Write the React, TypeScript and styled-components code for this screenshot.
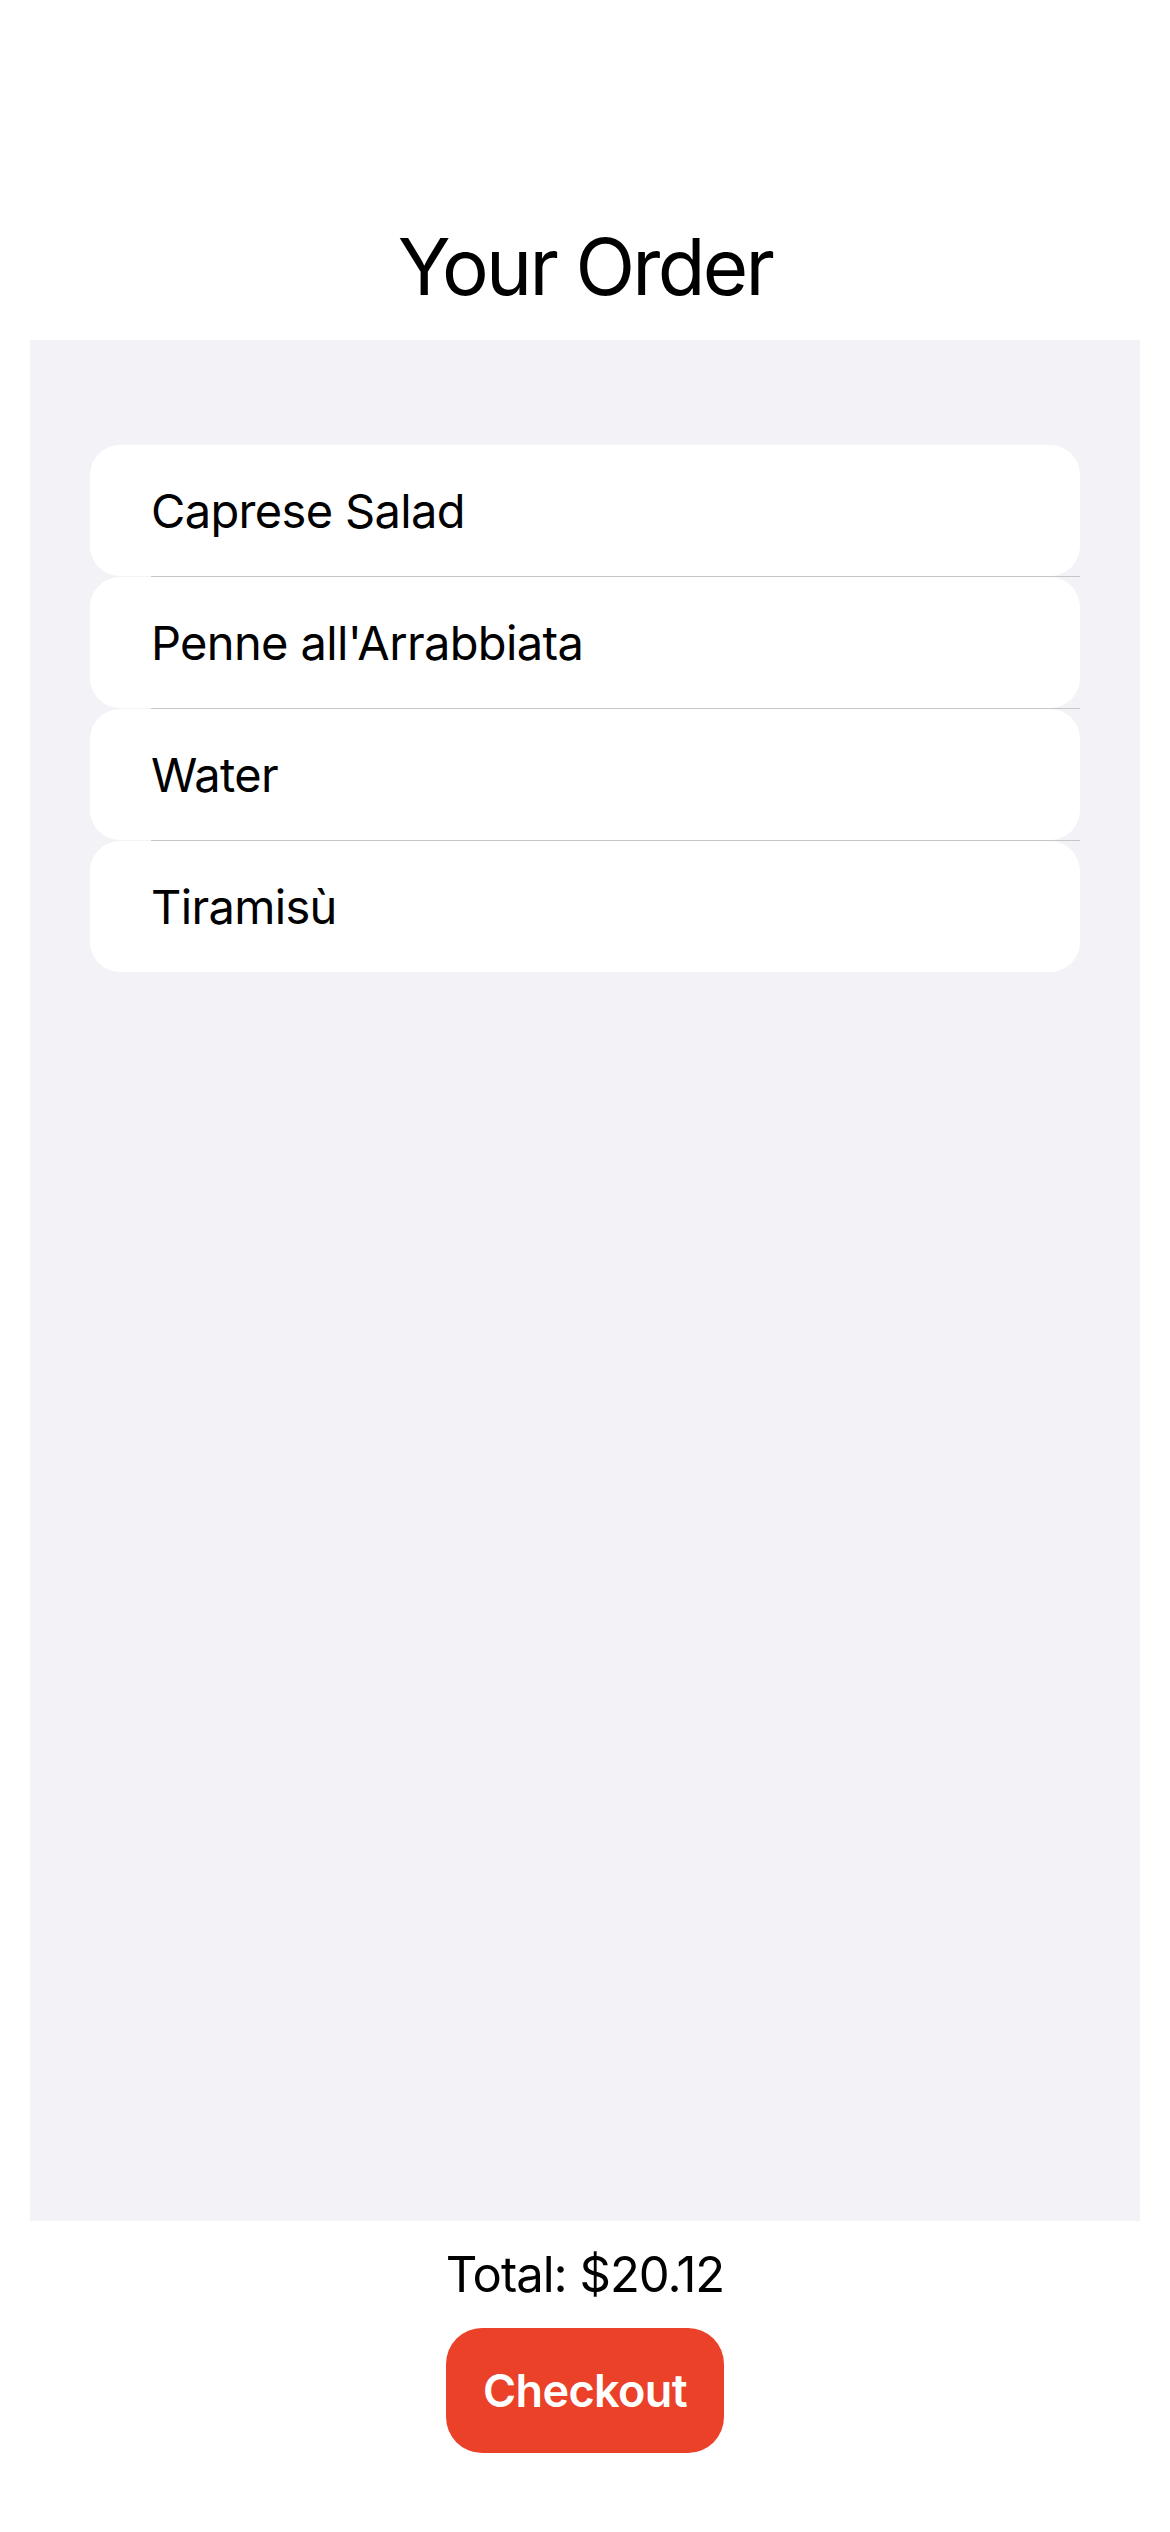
import React from "react";
import styled, { createGlobalStyle } from "styled-components";

const GlobalStyle = createGlobalStyle`
  html, body {
    margin: 0;
    padding: 0;
    background: #ffffff;
  }
  body {
    font-family: Inter, "Noto Sans", "Liberation Sans", sans-serif;
    color: #000000;
    -webkit-font-smoothing: antialiased;
  }
`;

const Screen = styled.div`
  display: flex;
  flex-direction: column;
  height: 2532px;
  width: 1170px;
  box-sizing: border-box;
`;

const Header = styled.header`
  padding-top: 217px;
  margin-bottom: 23px;
  display: flex;
  justify-content: center;
`;

const Title = styled.h1`
  margin: 0;
  font-size: 78px;
  line-height: 100px;
  font-weight: 400;
  letter-spacing: -2.7px;
`;

const ListArea = styled.main`
  flex: 1;
  margin: 0 30px;
  background: #f2f2f7;
  padding: 105px 60px 0;
  display: flex;
  flex-direction: column;
`;

const Row = styled.div`
  display: flex;
  flex-direction: column;
`;

const Card = styled.div`
  height: 131px;
  background: #ffffff;
  border-radius: 30px;
  display: flex;
  align-items: center;
  padding-left: 61px;
`;

const ItemName = styled.span`
  font-size: 47px;
  font-weight: 400;
  letter-spacing: -0.65px;
`;

const Separator = styled.div`
  height: 1px;
  margin-left: 61px;
  background: #c6c6c8;
`;

const Footer = styled.footer`
  display: flex;
  flex-direction: column;
  align-items: center;
  padding: 23px 0 79px;
  gap: 23px;
`;

const Total = styled.div`
  font-size: 49px;
  line-height: 61px;
  letter-spacing: -1px;
`;

const CheckoutButton = styled.button`
  width: 278px;
  height: 125px;
  border: none;
  border-radius: 36px;
  background: #ea4128;
  color: #ffffff;
  font-family: Inter, "Noto Sans", "Liberation Sans", sans-serif;
  font-size: 45px;
  font-weight: 600;
  letter-spacing: -0.6px;
  display: flex;
  align-items: center;
  justify-content: center;
  padding: 0;
  cursor: pointer;
`;

const items = ["Caprese Salad", "Penne all'Arrabbiata", "Water", "Tiramisù"];

export default function App() {
  return (
    <>
      <GlobalStyle />
      <Screen>
        <Header>
          <Title>Your Order</Title>
        </Header>
        <ListArea>
          {items.map((name, i) => (
            <Row key={name}>
              <Card>
                <ItemName>{name}</ItemName>
              </Card>
              {i < items.length - 1 && <Separator />}
            </Row>
          ))}
        </ListArea>
        <Footer>
          <Total>Total: $20.12</Total>
          <CheckoutButton>Checkout</CheckoutButton>
        </Footer>
      </Screen>
    </>
  );
}
